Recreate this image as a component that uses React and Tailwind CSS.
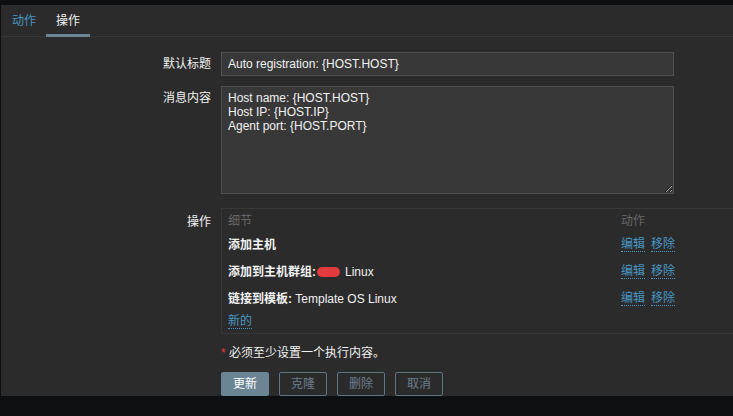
export default function App() {
  const font = { fontFamily: '"Liberation Sans", Arial, "Noto Sans CJK SC", sans-serif' };
  const link = "text-[#4796c4] border-b border-dotted border-[#4796c4] leading-[14px] cursor-pointer";
  return (
    <div className="w-[733px] h-[416px] bg-[#0e0f10] overflow-hidden text-[12px] text-[#f2f2f2]" style={font}>
      <div className="h-[5px]" />
      <div className="ml-[1px] w-[760px] h-[391px] bg-[#2b2b2b] flex flex-col">
        <div className="h-[32px] border-b border-[#383838] flex items-stretch pl-[11px]">
          <div className="flex items-center px-0 text-[#4796c4]">动作</div>
          <div className="ml-[10px] px-[10px] flex items-center relative text-[#f2f2f2]">
            操作
            <div className="absolute left-0 right-0 bottom-[-1px] h-[3px] bg-[#6b8594]" />
          </div>
        </div>
        <div className="pt-[15px] flex flex-col">
          <div className="flex">
            <div className="w-[210px] pr-0 text-right leading-[24px]">默认标题</div>
            <div className="pl-[10px]">
              <div className="w-[453px] h-[24px] bg-[#383838] border border-[#4f4f4f] px-[6px] leading-[22px]">
                Auto registration: {"{HOST.HOST}"}
              </div>
            </div>
          </div>
          <div className="flex mt-[10px]">
            <div className="w-[210px] text-right pt-[3px]">消息内容</div>
            <div className="pl-[10px]">
              <textarea
                className="block w-[453px] h-[108px] bg-[#383838] border border-[#4f4f4f] px-[6px] pt-[4px] pb-[3px] leading-[14px] text-[12px] text-[#f2f2f2] outline-none"
                style={font}
                defaultValue={"Host name: {HOST.HOST}\nHost IP: {HOST.IP}\nAgent port: {HOST.PORT}"}
              />
            </div>
          </div>
          <div className="flex mt-[14px]">
            <div className="w-[210px] text-right pt-[5px]">操作</div>
            <div className="pl-[10px]">
              <div className="w-[530px] h-[126px] border border-[#383838] pl-[6px] pt-[4px]">
                <div className="flex h-[16px] items-center text-[#686868]">
                  <div className="w-[393px]">细节</div>
                  <div>动作</div>
                </div>
                <div className="flex h-[27px] items-center mt-[2px] font-bold">
                  <div className="w-[393px]">添加主机</div>
                  <div className="flex gap-[6px] font-normal"><span className={link}>编辑</span><span className={link}>移除</span></div>
                </div>
                <div className="flex h-[27px] items-center">
                  <div className="w-[393px] flex items-center">
                    <span className="font-bold">添加到主机群组:</span>
                    <span className="inline-block w-[23px] h-[10px] bg-[#e33b3b] rounded-full ml-[1px] mr-[5px]" />
                    <span>Linux</span>
                  </div>
                  <div className="flex gap-[6px]"><span className={link}>编辑</span><span className={link}>移除</span></div>
                </div>
                <div className="flex h-[27px] items-center">
                  <div className="w-[393px]"><span className="font-bold">链接到模板:</span> Template OS Linux</div>
                  <div className="flex gap-[6px]"><span className={link}>编辑</span><span className={link}>移除</span></div>
                </div>
                <div className="flex h-[18px] items-center">
                  <span className={link}>新的</span>
                </div>
              </div>
            </div>
          </div>
          <div className="flex mt-[11px]">
            <div className="w-[210px]" />
            <div className="pl-[10px] leading-[16px]">
              <span className="text-[#e33b3b]">*</span> 必须至少设置一个执行内容。
            </div>
          </div>
          <div className="flex mt-[11px]">
            <div className="w-[210px]" />
            <div className="pl-[10px] flex gap-[10px]">
              <button className="w-[48px] h-[24px] rounded-[2px] bg-[#6b8594] text-white text-[12px]" style={font}>更新</button>
              <button className="w-[48px] h-[24px] rounded-[2px] border border-[#5f7482] text-[#6b7f8c] text-[12px]" style={font}>克隆</button>
              <button className="w-[48px] h-[24px] rounded-[2px] border border-[#5f7482] text-[#6b7f8c] text-[12px]" style={font}>删除</button>
              <button className="w-[48px] h-[24px] rounded-[2px] border border-[#5f7482] text-[#6b7f8c] text-[12px]" style={font}>取消</button>
            </div>
          </div>
        </div>
      </div>
    </div>
  );
}
